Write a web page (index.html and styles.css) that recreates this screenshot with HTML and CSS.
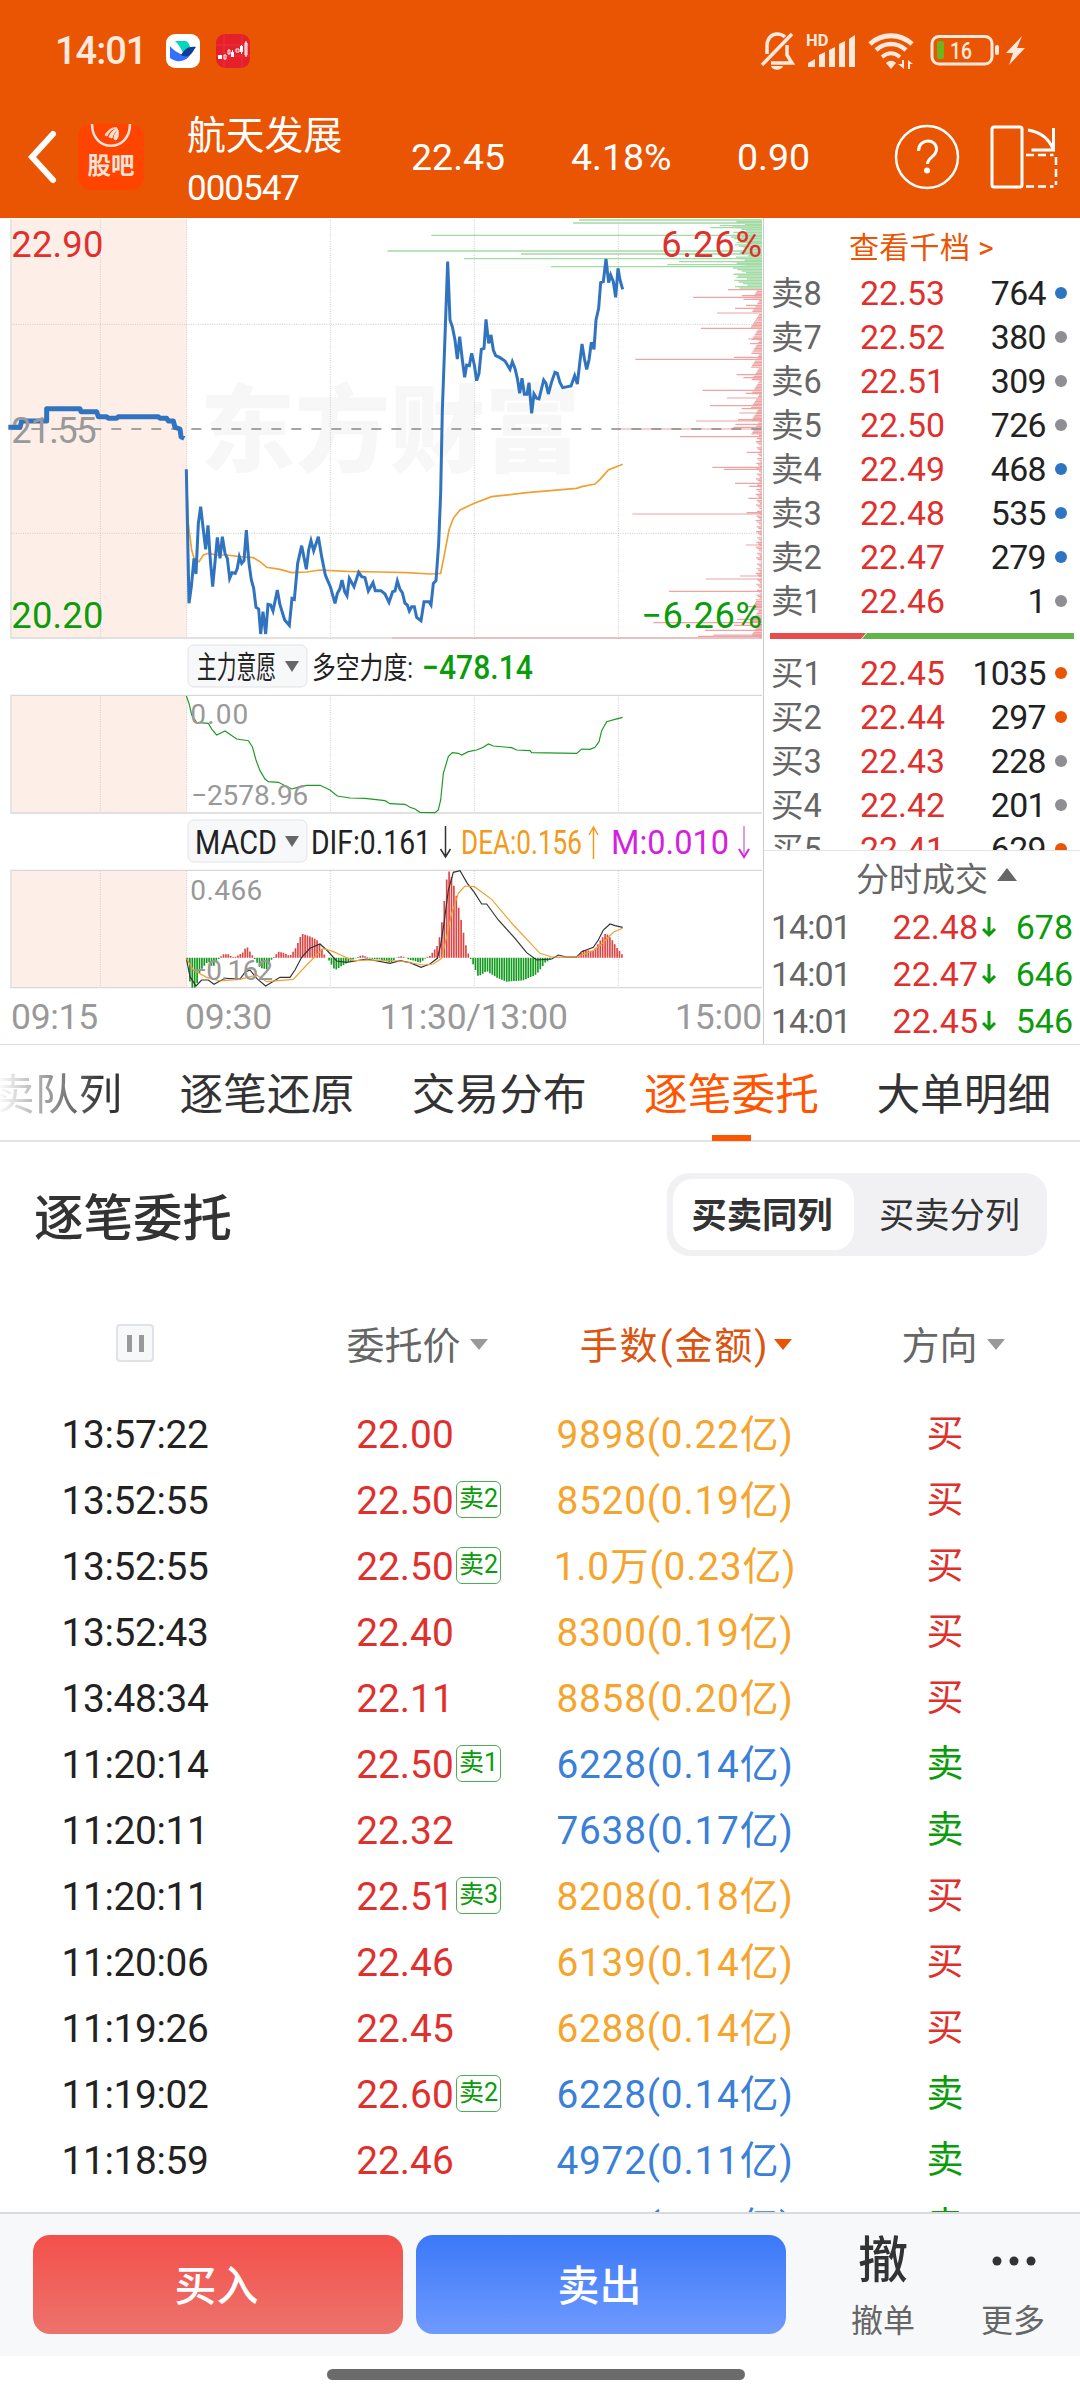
FILE: index.html
```html
<!DOCTYPE html>
<html lang="zh-CN">
<head>
    <meta charset="UTF-8">
    <meta name="viewport" content="width=device-width, initial-scale=1.0">
    <title>航天发展 000547</title>
    <link rel="stylesheet" href="styles.css">
</head>
<body>
    <header class="top">
        <div class="status-bar">
            <span class="clock">14:01</span>
            <svg class="app-badge" viewBox="0 0 34 34" width="34" height="34">
                <rect width="34" height="34" rx="9" fill="#fff"/>
                <path d="M9 7h11c3 2 4 4 4 7l-7 5c-2-5-4-8-8-12z" fill="#00d6b9"/>
                <path d="M4 12c5 6 12 10 20 9-4 7-14 8-20 3z" fill="#3370ff"/>
                <path d="M15 21c4-6 7-9 15-8-3 3-3 7-8 9-3 1-5 0-7-1z" fill="#133c9a"/>
            </svg>
            <svg class="app-badge" viewBox="0 0 34 34" width="34" height="34">
                <rect width="34" height="34" rx="9" fill="#e5202b"/>
                <path d="M0 11h34M0 22h34M8 0v34M26 0v34" stroke="#ea3239" stroke-width="1"/>
                <path d="M2 21h4v4H2zM15 18h3v5h-3zM24 12h3v6h-3z" fill="#fff"/>
                <path d="M8 21h2v4H8zM12 16h2v4h-2zM20 15h3v3h-3zM29 9h2v12h-2zM16.500 16v7M25.500 11v9M30 7v16" fill="none" stroke="#fff"/>
            </svg>
            <svg class="status-icons" viewBox="0 0 270 44" width="270" height="44">
                <g fill="none" stroke="#ffe9dc" stroke-width="3.5">
                    <path d="M3 36l30-31"/>
                    <path d="M8 25V17C8 10 12 5 18 5c3 0 6 1 8 3"/>
                    <path d="M12 34h21l-5-8v-10"/>
                    <path d="M111 15c12-11 30-11 42 0" stroke-width="5"/>
                    <path d="M117 21c9-8 21-8 30 0" stroke-width="4.500"/>
                    <path d="M123 28c6-5 12-5 18 0" stroke-width="4"/>
                    <rect x="173" y="7.500" width="60" height="27.500" rx="7" stroke-width="3"/>
                </g>
                <g fill="#ffe9dc">
                    <path d="M12 37h12c-1 5-11 5-12 0z"/>
                    <text x="47" y="17" font-size="16.500" font-weight="700">HD</text>
                    <path d="M49 38v-4l7-4v8zM60 38V26l6-3v15zM70 38V21l6-3v20zM80 38V15l6-3v26zM90 38V10l6-4v32z"/>
                    <path d="M127 34c3-3 7-3 10 0l-5 6z"/>
                    <path d="M145 40v-9h-2v4h-4zM149 31v9h2v-5h3z"/>
                    <rect x="236" y="16" width="4" height="10" rx="2"/>
                    <path d="M263 7l-16 17h7l-4 12 16-17h-8z"/>
                    <text x="191" y="30" font-size="23" font-weight="500" textLength="22" lengthAdjust="spacingAndGlyphs">16</text>
                </g>
                <rect x="178" y="12" width="7" height="18" rx="2" fill="#6cb51c"/>
            </svg>
        </div>
        <div class="title-bar">
            <svg class="back" viewBox="0 0 30 54" width="30" height="54">
                <path d="M26 4L5 27l21 23" fill="none" stroke="#fff" stroke-width="6" stroke-linecap="round"/>
            </svg>
            <div class="forum">
                <svg viewBox="0 0 66 28" width="66" height="28">
                    <path d="M14 0c0 29 38 29 38 0" fill="none" stroke="#ffe3d8" stroke-width="2.500"/>
                    <path d="M27 11c4-6 8-8 12-7-6 1-8 4-10 8zM31 13c2-5 5-8 9-8-4 3-5 6-6 9zM36 15c0-4 2-7 4-9 1 5 0 8-2 10z" fill="#ffe3d8" stroke="#ffe3d8"/>
                </svg>
                <span>股吧</span>
            </div>
            <div class="stock">
                <div class="stock-name">航天发展</div>
                <div class="stock-code">000547</div>
            </div>
            <span class="quote quote-price">22.45</span>
            <span class="quote quote-pct">4.18%</span>
            <span class="quote quote-diff">0.90</span>
            <svg class="tools" viewBox="0 0 168 68" width="168" height="68">
                <g fill="none" stroke="#fff" stroke-width="2.500">
                    <circle cx="34" cy="34" r="31"/>
                    <path d="M25.500 28c0-13 18-13 18-2 0 8-9 8-9 15" stroke-width="3"/>
                    <rect x="99" y="4" width="30" height="60" rx="2" stroke-width="3"/>
                    <path d="M135 7c12 2 21 9 25 19M160.500 5v22h-22" stroke-width="3"/>
                    <path d="M133 32h27.500M163 34v28M133 63.500h27.500" stroke-dasharray="8 4"/>
                </g>
                <circle cx="34" cy="47.500" r="3" fill="#fff"/>
            </svg>
        </div>
    </header>

    <section class="market">
        <div class="charts">
            <!-- chart drawings use 3 units per css pixel -->
            <svg class="chart" viewBox="0 24 2289 1266" width="763" height="422">
                <rect x="36" y="28" width="524" height="1254" fill="#fdeee7"/>
                <text x="600" y="765" class="watermark" textLength="1140">东方财富</text>
                <path class="grid" d="M301 30V1282M560 30V1282M991 30V1282M1423 30V1282M1855 30V1282M34 343H2286M34 970H2286"/>
                <path class="frame" d="M33 28V1284H2286"/>
                <path id="depthSell" stroke="#a3dba5" stroke-width="4"/>
                <path id="depthBuy" stroke="#f0a3a3" stroke-width="3.500"/>
                <path d="M34 657H2286" stroke="#888" stroke-width="5" stroke-dasharray="30 30"/>
                <path class="avg" d="M559 790L565 940L575 1020L585 1055L597 1055L610 1035L625 1030L650 1035L680 1035L720 1040L760 1043L780 1055L800 1072L840 1078L875 1088L920 1086L960 1080L1040 1084L1140 1086L1220 1088L1290 1092L1322 1090L1332 1040L1347 960L1360 925L1380 900L1423 880L1475 860L1580 848L1730 835L1745 830L1785 822L1800 808L1825 780L1868 763"/>
                <path class="price pre" d="M25 652H60L65 633H140V596H240L243 605H290L295 620H320L325 625H350L355 620H475L480 625H500L505 633H520L525 652L540 657L543 680L553 685"/>
                <path class="price" d="M559 778L567 1180L574 1130L582 1045L588 1092L595 940L602 890L610 960L617 1018L624 946L631 1050L638 1130L652 982L660 1045L667 980L675 1030L682 1045L689 1105L696 1088L706 1090L712 1075L718 1040L725 1060L732 1052L739 960L747 1060L754 1110L761 1135L768 1192L776 1197L782 1272L789 1205L797 1272L804 1183L812 1185L819 1203L832 1140L840 1185L854 1230L868 1246L876 1165L883 1168L893 1060L905 1007L919 1078L926 1020L933 992L941 1022L955 980L965 1040L976 1095L991 1130L1005 1180L1012 1150L1019 1138L1026 1110L1034 1145L1041 1157L1048 1105L1062 1130L1076 1087L1085 1100L1095 1103L1105 1143L1119 1118L1126 1142L1143 1142L1155 1152L1167 1177L1178 1145L1185 1143L1192 1113L1200 1138L1207 1148L1215 1180L1222 1185L1228 1203L1235 1190L1243 1190L1250 1222L1263 1232L1272 1175L1287 1175L1293 1185L1300 1120L1308 1112L1316 1000L1322 850L1327 600L1335 380L1343 155L1350 330L1357 350L1365 390L1372 447L1379 380L1387 450L1394 502L1400 465L1408 467L1415 430L1423 465L1430 512L1437 490L1444 418L1452 415L1458 328L1466 400L1473 375L1480 420L1487 437L1500 443L1515 453L1530 478L1537 455L1545 475L1552 505L1559 550L1566 505L1573 553L1581 553L1587 518L1595 610L1602 552L1610 565L1617 567L1631 510L1638 520L1645 552L1655 515L1665 487L1672 490L1680 518L1688 533L1713 528L1724 497L1732 522L1738 470L1746 402L1753 445L1760 478L1767 450L1774 397L1782 418L1788 330L1796 295L1802 218L1810 215L1818 147L1826 218L1832 195L1840 215L1847 262L1854 175L1860 210L1868 238"/>
                <g class="scale">
                    <text x="34" y="140" fill="#e0302d" textLength="276">22.90</text>
                    <text x="34" y="698" fill="#999" textLength="256">21.55</text>
                    <text x="34" y="1253" fill="#0a9c0a" textLength="276">20.20</text>
                    <text x="1984" y="140" fill="#e0302d" textLength="302">6.26%</text>
                    <text x="1924" y="1253" fill="#0a9c0a" textLength="362">−6.26%</text>
                </g>
            </svg>

            <svg class="legend" viewBox="0 0 763 54" width="763" height="54">
                <rect x="188" y="5" width="119" height="42" rx="6" class="chip"/>
                <text x="197" y="38" font-size="31" textLength="79" lengthAdjust="spacingAndGlyphs">主力意愿</text>
                <path d="M285 21h14l-7 11z" fill="#666"/>
                <text x="312" y="38" font-size="30" textLength="101" lengthAdjust="spacingAndGlyphs">多空力度:</text>
                <text x="422" y="39" font-size="33" font-weight="500" fill="#0a9c0a" textLength="111" lengthAdjust="spacingAndGlyphs">−478.14</text>
            </svg>

            <svg class="chart" viewBox="0 162 2289 360" width="763" height="120">
                <rect x="36" y="168" width="524" height="350" fill="#fdeee7"/>
                <path class="grid" d="M301 167V517M560 167V517M991 167V517M1423 167V517M1855 167V517"/>
                <path class="frame" d="M2286 166H33V519H2286"/>
                <path class="force" d="M559 168L567 190L575 225L590 247L625 250L637 270L650 285L675 273L710 297L745 302L757 320L768 360L780 392L795 417L805 425L835 427L875 447L890 443L920 436L960 436L990 450L1012 468L1050 474L1095 475L1155 482L1170 491L1215 493L1230 502L1245 507L1260 517L1305 518L1315 510L1322 480L1330 400L1345 350L1357 338L1375 340L1385 345L1405 335L1430 330L1450 322L1465 312L1480 318L1535 323L1550 330L1590 332L1595 338L1730 340L1745 327L1770 328L1785 322L1797 305L1805 272L1820 245L1845 238L1868 232"/>
                <g class="scale small">
                    <text x="571" y="253" textLength="174">0.00</text>
                    <text x="573" y="494" textLength="352">−2578.96</text>
                </g>
            </svg>

            <svg class="legend legend-macd" viewBox="0 0 763 55" width="763" height="55">
                <rect x="188" y="6" width="119" height="42" rx="6" class="chip"/>
                <text x="195" y="40" font-size="33" textLength="82" lengthAdjust="spacingAndGlyphs">MACD</text>
                <path d="M285 22h14l-7 11z" fill="#666"/>
                <text x="311" y="40" font-size="33" textLength="120" lengthAdjust="spacingAndGlyphs">DIF:0.161</text>
                <path d="M445.500 12v31M440.500 35l5 8 5-8" fill="none" stroke="#333" stroke-width="1.500"/>
                <text x="461" y="40" font-size="33" fill="#f39a1c" textLength="121" lengthAdjust="spacingAndGlyphs">DEA:0.156</text>
                <path d="M593.500 45V14M589 21l4.500-8 4.500 8" fill="none" stroke="#f39a1c" stroke-width="1.500"/>
                <text x="611" y="40" font-size="33" fill="#d322dd" textLength="118" lengthAdjust="spacingAndGlyphs">M:0.010</text>
                <path d="M744 12v28" stroke="#d8a0dc" stroke-width="2"/>
                <path d="M739 35l5 8 5-8" fill="none" stroke="#d322dd" stroke-width="2"/>
            </svg>

            <svg class="chart" viewBox="0 687 2289 360" width="763" height="120">
                <rect x="36" y="693" width="524" height="350" fill="#fdeee7"/>
                <path class="grid" d="M301 692V1042M560 692V1042M991 692V1042M1423 692V1042M1855 692V1042"/>
                <path class="frame" d="M2286 691H33V1043H2286"/>
                <path id="macdUp" stroke="#de4442" stroke-width="5"/>
                <path id="macdDown" stroke="#129a1d" stroke-width="5"/>
                <path class="dif" d="M559 955L570 1010L588 1038L605 1020L625 1020L642 1033L675 1015L720 1017L735 997L750 990L770 1015L797 1038L840 1012L870 1012L885 990L905 952L930 925L960 912L980 930L1010 963L1040 967L1100 957L1170 970L1200 962L1230 968L1263 982L1290 972L1312 955L1322 915L1332 850L1345 750L1360 697L1380 692L1402 730L1423 757L1445 792L1460 792L1495 840L1545 895L1580 938L1610 960L1655 957L1675 945L1700 951L1730 951L1745 935L1780 922L1795 900L1810 870L1830 852L1845 857L1868 862"/>
                <path class="dea" d="M559 955L580 990L620 1012L660 1023L720 1018L770 1005L800 1025L880 1018L920 975L970 925L1000 935L1060 962L1120 960L1200 963L1270 975L1300 972L1325 955L1340 890L1355 820L1375 760L1395 738L1423 740L1475 778L1540 855L1620 940L1655 951L1730 951L1780 932L1805 912L1840 877L1868 865"/>
                <g class="scale small">
                    <text x="571" y="779" textLength="216">0.466</text>
                    <text x="573" y="1019" textLength="246">−0.162</text>
                </g>
            </svg>

            <div class="time-axis">
                <span>09:15</span>
                <span>09:30</span>
                <span>11:30/13:00</span>
                <span class="close">15:00</span>
            </div>
        </div>

        <aside class="book">
            <a class="more-levels">查看千档 &gt;</a>
            <div id="asks"></div>
            <svg class="ratio" viewBox="0 0 304 6" width="304" height="6">
                <path d="M0 0h96l-5 6H0z" fill="#e64c4c"/>
                <path d="M97 0h207v6H92z" fill="#5fb548"/>
            </svg>
            <div id="bids"></div>
            <div class="ticks-title">分时成交<i class="tri-up"></i></div>
            <div id="ticks"></div>
        </aside>
    </section>

    <nav class="tabs">
        <span class="faded">卖队列</span>
        <span>逐笔还原</span>
        <span>交易分布</span>
        <span class="active">逐笔委托</span>
        <span>大单明细</span>
    </nav>

    <div class="section-head">
        <h2>逐笔委托</h2>
        <div class="switch">
            <span class="on">买卖同列</span>
            <span>买卖分列</span>
        </div>
    </div>

    <div class="orders">
        <div class="order-row order-head">
            <span><i class="pause"></i></span>
            <span class="head-price">委托价<i class="tri"></i></span>
            <span class="sorted">手数(金额)<i class="tri"></i></span>
            <span class="head-side">方向<i class="tri"></i></span>
        </div>
        <div id="orderRows"></div>
    </div>

    <footer class="actions">
        <button class="btn buy">买入</button>
        <button class="btn sell">卖出</button>
        <div class="action"><b>撤</b><span>撤单</span></div>
        <div class="action">
            <svg viewBox="0 0 48 48" width="48" height="48" fill="#333"><circle cx="8" cy="24" r="4.500"/><circle cx="25" cy="24" r="4.500"/><circle cx="42" cy="24" r="4.500"/></svg>
            <span>更多</span>
        </div>
    </footer>
    <div class="home-bar"></div>

    <script>
        const asks = [
            ['卖8', '22.53', 764, 'blue'], ['卖7', '22.52', 380, ''], ['卖6', '22.51', 309, ''], ['卖5', '22.50', 726, ''],
            ['卖4', '22.49', 468, 'blue'], ['卖3', '22.48', 535, 'blue'], ['卖2', '22.47', 279, 'blue'], ['卖1', '22.46', 1, '']
        ];
        const bids = [
            ['买1', '22.45', 1035, 'orange'], ['买2', '22.44', 297, 'orange'], ['买3', '22.43', 228, ''],
            ['买4', '22.42', 201, ''], ['买5', '22.41', 629, 'orange']
        ];
        const ticks = [['14:01', '22.48', 678], ['14:01', '22.47', 646], ['14:01', '22.45', 546]];
        // time, price, queue badge, amount, amount color, side
        const orders = [
            ['13:57:22', '22.00', '', '9898(0.22亿)', 'amber', '买'],
            ['13:52:55', '22.50', '卖2', '8520(0.19亿)', 'amber', '买'],
            ['13:52:55', '22.50', '卖2', '1.0万(0.23亿)', 'amber', '买'],
            ['13:52:43', '22.40', '', '8300(0.19亿)', 'amber', '买'],
            ['13:48:34', '22.11', '', '8858(0.20亿)', 'amber', '买'],
            ['11:20:14', '22.50', '卖1', '6228(0.14亿)', 'blue', '卖'],
            ['11:20:11', '22.32', '', '7638(0.17亿)', 'blue', '卖'],
            ['11:20:11', '22.51', '卖3', '8208(0.18亿)', 'amber', '买'],
            ['11:20:06', '22.46', '', '6139(0.14亿)', 'amber', '买'],
            ['11:19:26', '22.45', '', '6288(0.14亿)', 'amber', '买'],
            ['11:19:02', '22.60', '卖2', '6228(0.14亿)', 'blue', '卖'],
            ['11:18:59', '22.46', '', '4972(0.11亿)', 'blue', '卖'],
            ['11:18:39', '22.36', '', '6226(0.14亿)', 'blue', '卖']
        ];

        function level(r) {
            return `<div class="level"><span>${r[0]}</span><span class="red">${r[1]}</span><span class="vol">${r[2]}</span><i class="dot ${r[3]}"></i></div>`;
        }
        document.getElementById('asks').innerHTML = asks.map(level).join('');
        document.getElementById('bids').innerHTML = bids.map(level).join('');
        document.getElementById('ticks').innerHTML = ticks.map(t => `
            <div class="tick"><span>${t[0]}</span><span class="red">${t[1]}</span>
            <svg viewBox="0 0 16 24" width="16" height="24"><path d="M8 2v18M2 14l6 6 6-6" fill="none" stroke="#0a9c0a" stroke-width="3"/></svg>
            <span class="green">${t[2]}</span></div>`).join('');
        document.getElementById('orderRows').innerHTML = orders.map(o => `
            <div class="order-row">
                <span>${o[0]}</span>
                <span class="red order-price">${o[1]}${o[2] ? `<em class="queue">${o[2]}</em>` : ''}</span>
                <span class="amount amount-${o[4]}">${o[3]}</span>
                <span class="${o[5] === '买' ? 'red' : 'green'} side">${o[5]}</span>
            </div>`).join('');

        // order depth on the right edge of the price chart: [y, left end]
        const depth = [
            [30, 1737], [39, 1719], [47, 2160], [53, 2130], [76, 1294], [81, 2192], [98, 2210], [123, 1162], [132, 1563], [146, 1392],
            [155, 2037], [164, 2002], [170, 1653], [193, 2203], [202, 2210], [216, 2220],
            [239, 2184], [257, 2225], [262, 2079], [268, 2230], [286, 2238], [295, 2205], [309, 2151], [355, 2103],
            [387, 2245], [401, 2250], [442, 2202], [448, 1906], [494, 2210], [503, 2230], [541, 2107], [550, 2237],
            [564, 2181], [587, 2130], [596, 2225], [609, 2218], [629, 2214], [633, 2088], [643, 2206], [652, 2200],
            [657, 1865], [680, 2040], [727, 2240], [772, 2137], [778, 2172], [820, 2205], [829, 2247], [865, 2245],
            [908, 2240], [912, 1897], [1005, 2238], [1098, 2220], [1107, 2118], [1144, 2007], [1190, 2240], [1228, 2212],
            [1238, 1960], [1246, 2202], [1261, 2115], [1275, 2140], [1279, 2094], [1284, 1176]
        ];
        let sell = '', buy = '';
        depth.forEach(([y, x]) => {
            if (y < 235) sell += `M${x} ${y}H2286`;
            else buy += `M${x} ${y}H2286`;
        });
        for (let y = 30, i = 0; y < 1284; y += 4.65, i++) {
            const quiet = y > 690 && y < 1170;
            const len = y < 235 ? 40 + (i * 37) % 50 : (quiet ? 3 : 8) + (i * 29) % (quiet ? 17 : 26);
            if (y < 235) sell += `M${2286 - len} ${y}H2286`;
            else buy += `M${2286 - len} ${y}H2286`;
        }
        document.getElementById('depthSell').setAttribute('d', sell);
        document.getElementById('depthBuy').setAttribute('d', buy);

        // MACD histogram outline, one bar per minute
        const macd = [
            [562, -10], [572, -90], [588, -90], [600, -40], [625, -10], [638, -30], [655, -5], [660, 0], [668, 10], [685, 10],
            [700, 0], [712, 5], [730, 17], [740, 35], [755, 10], [765, -5], [780, -30], [800, -35], [815, -5], [825, 5],
            [835, 18], [850, 15], [870, 5], [888, 30], [905, 72], [935, 62], [955, 50], [975, 5], [985, -5], [1005, -38],
            [1025, -25], [1050, -10], [1070, 0], [1085, 8], [1100, 2], [1110, -3], [1140, -5], [1172, -15], [1190, 0],
            [1200, 5], [1210, 3], [1225, -5], [1262, -15], [1280, 2], [1290, 5], [1315, 40], [1325, 100], [1343, 260],
            [1350, 258], [1366, 200], [1380, 130], [1400, 25], [1410, 0], [1415, -10], [1435, -57], [1460, -40], [1490, -60],
            [1520, -72], [1570, -68], [1610, -50], [1635, -15], [1660, 0], [1720, 0], [1735, 5], [1750, 23], [1780, 20],
            [1800, 50], [1818, 75], [1835, 55], [1852, 28], [1870, 5]
        ];
        let up = '', down = '';
        for (let x = 562.5, k = 0; x < 1870; x += 7.2) {
            while (macd[k + 1][0] < x) k++;
            const [x0, h0] = macd[k], [x1, h1] = macd[k + 1];
            const h = h0 + (h1 - h0) * (x - x0) / (x1 - x0);
            if (h >= 0) up += `M${x} 953v${-Math.max(h, 2)}`;
            else down += `M${x} 953v${-h}`;
        }
        document.getElementById('macdUp').setAttribute('d', up);
        document.getElementById('macdDown').setAttribute('d', down);
    </script>
</body>
</html>
```
FILE: styles.css
```css
* {
    box-sizing: border-box;
}
body {
    margin: 0;
    width: 1080px;
    height: 2400px;
    overflow: hidden;
    display: flex;
    flex-direction: column;
    background: #fff;
    color: #222;
    font-family: Roboto, "Noto Sans CJK SC", sans-serif;
}
svg {
    display: block;
    flex: none;
}
i, em {
    font-style: normal;
}
.red { color: #e0302d; }
.green { color: #0a9c0a; }

/* header */
.top {
    height: 218px;
    flex: none;
    background: #ea5504;
    color: #fff;
}
.status-bar {
    height: 101px;
    padding: 0 51px 0 55px;
    display: flex;
    align-items: center;
}
.clock {
    width: 111px;
    font-size: 38px;
    font-weight: 500;
    letter-spacing: -1px;
    color: #ffe9dc;
}
.app-badge {
    margin-right: 16px;
}
.status-icons {
    margin-left: auto;
}
.title-bar {
    height: 111px;
    padding-left: 27px;
    display: flex;
    align-items: center;
}
.forum {
    width: 66px;
    height: 66px;
    margin-left: 21px;
    border-radius: 13px;
    background: #ff4400;
    text-align: center;
}
.forum span {
    display: block;
    font-size: 23.5px;
    line-height: 29px;
    font-weight: 700;
    color: #ffe3d8;
}
.stock {
    width: 224px;
    margin: 13px 0 0 43px;
}
.stock-name {
    font-size: 38.8px;
    line-height: 52px;
}
.stock-code {
    font-size: 35px;
    line-height: 54px;
    letter-spacing: -1px;
}
.quote {
    font-size: 37.5px;
}
.quote-price {
    width: 160px;
}
.quote-pct {
    width: 166px;
}
.quote-diff {
    width: 156px;
}

/* charts and order book */
.market {
    height: 827px;
    flex: none;
    display: flex;
    border-bottom: 1px solid #ddd;
}
.charts {
    width: 763px;
    height: 826px;
}
.grid {
    fill: none;
    stroke: #ccc;
    stroke-width: 3;
    stroke-dasharray: 3 4;
}
.frame {
    fill: none;
    stroke: #d8d8d8;
    stroke-width: 4;
}
.watermark {
    font-size: 285px;
    font-weight: 900;
    fill: #f7f7f7;
}
.avg, .dea {
    fill: none;
    stroke: #f0a030;
    stroke-width: 5;
}
.price {
    fill: none;
    stroke: #3073bf;
    stroke-width: 9;
}
.pre {
    stroke-width: 15;
    stroke-linejoin: round;
}
.force, .dif {
    fill: none;
    stroke: #1c9a22;
    stroke-width: 3.5;
}
.dif {
    stroke: #333;
}
.dea {
    stroke-width: 3.5;
}
.scale {
    font-size: 109px;
}
.small {
    font-size: 84px;
    fill: #999;
}
.chip {
    fill: #f7f8fa;
    stroke: #e2e3e6;
}
.legend {
    fill: #222;
}
.time-axis {
    height: 55px;
    padding: 1px 1px 0 11px;
    display: grid;
    grid-template-columns: 174px 1fr auto 1fr;
    align-items: center;
    font-size: 35.5px;
    letter-spacing: -.3px;
    color: #999;
}
.close {
    text-align: right;
}
.book {
    width: 317px;
    height: 826px;
    padding-left: 7px;
    border-left: 1px solid #ccc;
}
.more-levels {
    display: block;
    height: 53px;
    padding: 10px 0 0 78px;
    font-size: 30px;
    line-height: 40px;
    letter-spacing: .3px;
    color: #ea5504;
}
.level {
    height: 44px;
    display: grid;
    grid-template-columns: 85px 89px 101px 1fr;
    align-items: center;
    font-size: 33.8px;
    line-height: 44px;
    color: #666;
}
.level span {
    padding-top: 1px;
}
.level .red {
    text-align: right;
}
.level span:first-child {
    font-size: 32.5px;
}
.vol {
    text-align: right;
    letter-spacing: -.6px;
    color: #222;
}
.dot {
    width: 12px;
    height: 12px;
    margin: -2px 0 0 9px;
    border-radius: 50%;
    background: #8e8e93;
}
.blue { background: #2f74c0; }
.orange { background: #ea5504; }
.ratio {
    margin: 10px 0 12px -1px;
}
#bids {
    height: 200px;
    margin-left: -7px;
    padding-left: 7px;
    overflow: hidden;
    border-bottom: 1px solid #e5e5e5;
}
.ticks-title {
    height: 52px;
    padding-left: 85px;
    display: flex;
    align-items: center;
    font-size: 33px;
    color: #666;
}
.tri-up {
    margin: -6px 0 0 9px;
    border: 10px solid transparent;
    border-top: 0;
    border-bottom: 13px solid #666;
}
.tick {
    height: 47px;
    display: grid;
    grid-template-columns: 76px 131px 22px 73px;
    align-items: center;
    font-size: 34px;
    color: #666;
}
.tick > span:first-child {
    letter-spacing: -1px;
}
.tick .red, .tick .green {
    text-align: right;
}
.tick svg {
    margin-left: 3px;
}

/* tabs */
.tabs {
    height: 97px;
    flex: none;
    display: flex;
    gap: 57.5px;
    border-bottom: 2px solid #e3e3e5;
    font-size: 43.7px;
    line-height: 100px;
    color: #333;
    white-space: nowrap;
}
.tabs .faded {
    margin-left: -9px;
    background: linear-gradient(90deg, #fff 5%, #333 85%);
    -webkit-background-clip: text;
    color: transparent;
}
.tabs .active {
    color: #ff5500;
    height: 96px;
    background: linear-gradient(#ff5500, #ff5500) 50% 100% / 39px 6px no-repeat;
}
.section-head {
    height: 144px;
    flex: none;
    padding: 0 33px 0 34px;
    display: flex;
    align-items: center;
    justify-content: space-between;
}
.section-head h2 {
    margin: 0;
    font-size: 49.5px;
    font-weight: 500;
    color: #333;
}
.switch {
    width: 380px;
    height: 83px;
    padding: 6px;
    display: flex;
    border-radius: 22px;
    background: #f1f1f4;
    font-size: 35.3px;
    line-height: 74px;
    text-align: center;
    color: #333;
}
.switch span {
    flex: 1;
    padding-left: 4px;
}
.switch .on {
    flex: none;
    width: 181px;
    padding: 0 3px 0 0;
    height: 71px;
    border-radius: 20px;
    background: #fff;
    font-weight: 700;
}

/* order list */
.orders {
    height: 926px;
    flex: none;
    overflow: hidden;
}
.order-row {
    height: 66px;
    display: grid;
    grid-template-columns: 270px 270px 270px 270px;
    font-size: 38.8px;
    line-height: 66px;
    text-align: center;
}
.order-row > span {
    white-space: nowrap;
}
.order-row > span:first-child {
    letter-spacing: -.3px;
}
.order-head {
    height: 116px;
    font-size: 38px;
    line-height: 121px;
    color: #666;
}
.head-price {
    padding-left: 24px;
}
.head-side {
    padding-left: 16px;
}
.order-head .sorted {
    padding-left: 22px;
    letter-spacing: 1.9px;
    color: #dc5510;
}
.tri {
    display: inline-block;
    margin: 0 0 9px 9px;
    border: 9px solid transparent;
    border-bottom: 0;
    border-top: 11px solid #999;
}
.sorted .tri {
    margin-left: 5px;
    border-top-color: #ea5504;
}
.pause {
    display: inline-block;
    width: 38px;
    height: 38px;
    margin-top: -11px;
    vertical-align: middle;
    border: 2px solid #dfe2e6;
    border-radius: 4px;
    background:
        linear-gradient(#999, #999) 9px 9px / 5px 17px no-repeat,
        linear-gradient(#999, #999) 21px 9px / 5px 17px no-repeat,
        #f6f8fa;
}
.order-price {
    position: relative;
}
.queue {
    position: absolute;
    left: 186px;
    top: 13px;
    height: 37px;
    padding: 0 2px;
    border: 1.5px solid #4fae52;
    border-radius: 6px;
    font-size: 25px;
    line-height: 34px;
    color: #0a9c0a;
}
.amount {
    letter-spacing: .8px;
}
.amount-amber { color: #f5a52d; }
.amount-blue { color: #3a80d8; }
.side {
    font-size: 37px;
}

/* bottom bar */
.actions {
    height: 144px;
    flex: none;
    padding: 21px 0 0 33px;
    display: flex;
    border-top: 2px solid #d8dadd;
    background: #f7f8fa;
}
.btn {
    width: 370px;
    height: 99px;
    margin-right: 13px;
    padding: 0 3px 4px 0;
    border: 0;
    border-radius: 17px;
    font-family: inherit;
    font-size: 42px;
    font-weight: 500;
    color: #fff;
}
.buy { background: linear-gradient(#f4504a, #ec736c); }
.sell { background: linear-gradient(#3b78f8, #6f9aff); }
.action {
    width: 130px;
    margin-top: 2px;
    display: flex;
    flex-direction: column;
    align-items: center;
    font-size: 32px;
    color: #666;
}
.btn + .action {
    margin-left: 19px;
}
.action b {
    font-size: 50px;
    line-height: 48px;
    font-weight: 500;
    color: #333;
}
.action span {
    margin-top: 13px;
    line-height: 46px;
}
.home-bar {
    width: 418px;
    height: 11px;
    margin: 13px 0 0 327px;
    border-radius: 6px;
    background: #6b6b6b;
}
```
